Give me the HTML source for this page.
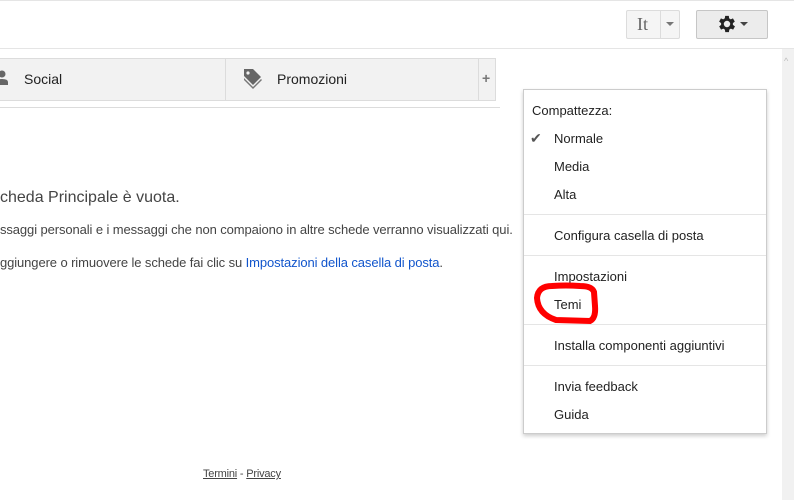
<!DOCTYPE html>
<html><head><meta charset="utf-8"><style>
body{margin:0;width:794px;height:500px;position:relative;overflow:hidden;background:#fff;font-family:"Liberation Sans",Arial,sans-serif;color:#222;}
.a{position:absolute;}
.menu div.i{position:absolute;left:30px;font-size:13px;color:#222;}
.sep{position:absolute;left:0;width:242px;height:1px;background:#e5e5e5;}
</style></head><body>
<div class="a" style="left:0;top:0;width:794px;height:1px;background:#e5e5e5"></div>
<div class="a" style="left:0;top:48px;width:794px;height:1px;background:#e5e5e5"></div>
<!-- lang button -->
<div class="a" style="left:626px;top:10px;width:52px;height:27px;border:1px solid #dcdcdc;border-radius:2px;background:#f5f5f5"></div>
<div class="a" style="left:660px;top:10px;width:1px;height:29px;background:#dcdcdc"></div>
<div class="a" style="left:637px;top:14px;font-family:'Liberation Serif',serif;font-size:18px;color:#666">It</div>
<div class="a" style="left:666px;top:22px;width:0;height:0;border-left:4px solid transparent;border-right:4px solid transparent;border-top:4px solid #777"></div>
<!-- gear -->
<div class="a" style="left:696px;top:10px;width:70px;height:27px;border:1px solid #c6c6c6;border-radius:2px;background:#ececec"></div>
<svg class="a" style="left:716px;top:13px" width="22" height="22" viewBox="0 0 24 24"><path fill="#222" d="M19.4 13a7.5 7.5 0 000-2l2.1-1.6-2-3.5-2.5 1a7.4 7.4 0 00-1.7-1L15 3.2h-4l-.4 2.7a7.4 7.4 0 00-1.7 1l-2.5-1-2 3.5L6.6 11a7.5 7.5 0 000 2l-2.1 1.6 2 3.5 2.5-1c.5.4 1.1.7 1.7 1l.4 2.7h4l.4-2.7c.6-.3 1.2-.6 1.7-1l2.5 1 2-3.5zM13 15.5a3.5 3.5 0 110-7 3.5 3.5 0 010 7z" transform="translate(-1 0)"/></svg>
<div class="a" style="left:740px;top:22px;width:0;height:0;border-left:4px solid transparent;border-right:4px solid transparent;border-top:4px solid #444"></div>
<!-- scrollbar -->
<div class="a" style="left:782px;top:49px;width:12px;height:451px;background:#f1f1f1"></div>
<div class="a" style="left:784px;top:56px;font-size:9px;color:#bbb">^</div>
<!-- tabs -->
<div class="a" style="left:0;top:58px;width:495px;height:41px;background:#f2f2f2;border-top:1px solid #dcdcdc;border-bottom:1px solid #dcdcdc"></div>
<div class="a" style="left:225px;top:59px;width:1px;height:41px;background:#dcdcdc"></div>
<div class="a" style="left:478px;top:59px;width:1px;height:41px;background:#dcdcdc"></div>
<div class="a" style="left:495px;top:58px;width:1px;height:43px;background:#dcdcdc"></div>
<div class="a" style="left:0;top:107px;width:500px;height:1px;background:#dcdcdc"></div>
<svg class="a" style="left:0;top:70px" width="10" height="16"><circle cx="2" cy="4" r="3.5" fill="#666"/><path d="M-4 15v-3q0-3 6-3t6 3v3z" fill="#666"/></svg>
<div class="a" style="left:24px;top:71px;font-size:14px;color:#222">Social</div>
<svg class="a" style="left:243px;top:68px" width="20" height="22" viewBox="0 0 20 22"><path d="M1 1h9l8 8-8 8-9-9z" fill="#666"/><circle cx="5" cy="5" r="1.6" fill="#f2f2f2"/><path d="M1 10l9 9 8-8 1 1-9 9-9-9z" fill="#777"/></svg>
<div class="a" style="left:277px;top:71px;font-size:14px;color:#222">Promozioni</div>
<div class="a" style="left:482px;top:70px;font-size:14px;color:#777;font-weight:bold">+</div>
<!-- body text -->
<div class="a" style="left:0;top:189px;font-size:16px;color:#444">cheda Principale è vuota.</div>
<div class="a" style="left:0;top:222px;font-size:13px;color:#444;letter-spacing:-0.1px">ssaggi personali e i messaggi che non compaiono in altre schede verranno visualizzati qui.</div>
<div class="a" style="left:0;top:255px;font-size:13px;color:#444;letter-spacing:-0.1px">ggiungere o rimuovere le schede fai clic su <span style="color:#15c">Impostazioni della casella di posta</span>.</div>
<div class="a" style="left:203px;top:468px;font-size:11px;color:#444;letter-spacing:-0.2px"><u>Termini</u> - <u>Privacy</u></div>
<!-- menu -->
<div class="a menu" style="left:523px;top:89px;width:242px;height:343px;background:#fff;border:1px solid #ccc;box-shadow:0 2px 4px rgba(0,0,0,.2)">
<div class="a" style="left:8px;top:13px;font-size:13px;color:#222">Compattezza:</div>
<div class="a" style="left:6px;top:40px;font-size:14px;color:#555">✔</div>
<div class="i" style="top:41px">Normale</div>
<div class="i" style="top:69px">Media</div>
<div class="i" style="top:97px">Alta</div>
<div class="sep" style="top:124px"></div>
<div class="i" style="top:138px">Configura casella di posta</div>
<div class="sep" style="top:165px"></div>
<div class="i" style="top:179px">Impostazioni</div>
<div class="i" style="top:207px">Temi</div>
<div class="sep" style="top:234px"></div>
<div class="i" style="top:248px">Installa componenti aggiuntivi</div>
<div class="sep" style="top:275px"></div>
<div class="i" style="top:289px">Invia feedback</div>
<div class="i" style="top:317px">Guida</div>
</div>
<svg class="a" style="left:530px;top:280px" width="72" height="48"><path d="M22 6 Q8 6 7 18 Q8 34 26 40 L60 41 Q66 38 65 26 L64 12 Q62 6 50 6 Q36 5 22 6" fill="none" stroke="#f00" stroke-width="6" stroke-linecap="round"/></svg>
</body></html>
